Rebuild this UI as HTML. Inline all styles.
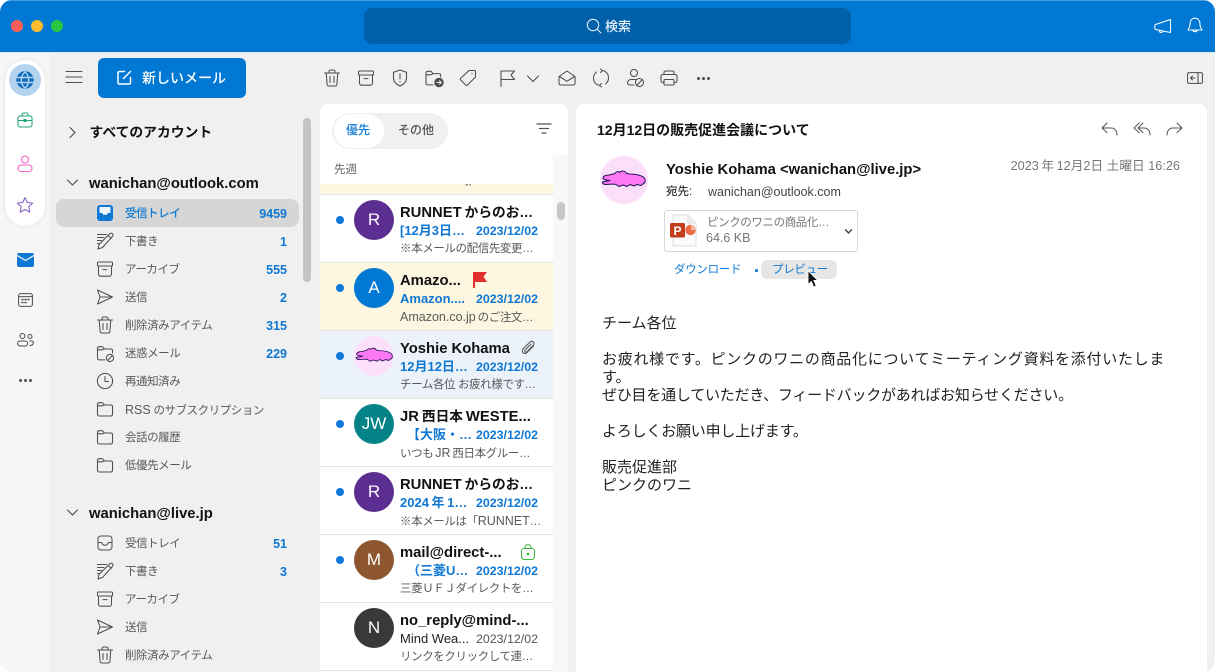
<!DOCTYPE html>
<html lang="ja"><head><meta charset="utf-8"><title>Outlook</title>
<style>
html,body{margin:0;padding:0;width:1215px;height:672px;overflow:hidden;background:#fff}
body{font-family:"Liberation Sans","Noto Sans CJK JP",sans-serif;color:#111}
#w{position:absolute;left:0;top:0;width:1215px;height:672px;background:#f0f0f0;border-radius:12px;overflow:hidden}
.a{position:absolute}
.t{position:absolute;white-space:nowrap;line-height:20px;height:20px}
svg.i{position:absolute;fill:none;stroke:currentColor;stroke-width:1.05;stroke-linecap:round;stroke-linejoin:round;overflow:visible}
.f{left:125px;font-size:11.500px;letter-spacing:-.45px;color:#595959;margin-top:1px}
.l{font-size:12.500px;letter-spacing:0}
.c{right:928px;font-size:12.500px;font-weight:bold;color:#0f78d4;margin-top:.5px}
.fi{left:95px;width:20px;height:20px;color:#4f4f4f}
.tb{width:20px;height:20px;color:#4d4d4d}
.it{position:absolute;left:320px;width:233px;height:67px;border-bottom:1.500px solid #e4e4e4;background:#fff}
.dot{position:absolute;left:16px;width:8px;height:8px;border-radius:50%;background:#0f78d9;top:21px}
.av{position:absolute;left:34px;top:5px;width:40px;height:40px;border-radius:50%;color:#fff;font-size:17px;line-height:40px;text-align:center}
.n{position:absolute;left:80px;top:7.500px;font-size:14.800px;font-weight:bold;line-height:20px;white-space:nowrap;color:#111}
.n span{font-size:13.700px}
.s{position:absolute;left:80px;top:26px;font-size:13px;font-weight:bold;line-height:20px;white-space:nowrap;color:#0f78d4}
.d{position:absolute;right:15px;top:26px;font-size:12.400px;font-weight:bold;line-height:20px;color:#0f78d4}
.p{position:absolute;left:80px;top:43.500px;font-size:11.500px;letter-spacing:-.4px;line-height:20px;white-space:nowrap;color:#595959}
</style></head><body>
<svg width="0" height="0" style="position:absolute">
<defs>
<symbol id="trash" viewBox="0 0 20 20"><path d="M2.500 5h15M7 5V3.600C7 2.700 7.700 2 8.600 2h2.800c.9 0 1.600.7 1.600 1.600V5M4.200 5l.9 11.200c.1 1.100 1 1.800 2 1.800h5.800c1 0 1.900-.7 2-1.800L15.800 5M8 8.500v6M12 8.500v6"/></symbol>
<symbol id="arch" viewBox="0 0 20 20"><rect x="2.500" y="3" width="15" height="4" rx=".8"/><path d="M3.500 7v8c0 1.300 1 2.200 2.200 2.200h8.600c1.200 0 2.200-.9 2.200-2.200V7M8 10.600h4"/></symbol>
<symbol id="draft" viewBox="0 0 20 20"><path d="M2.500 3.500h9M2.500 6.500h6.500M2.500 9.500h4M2.500 12.500h2M3 18l1-4.500L14.800 2.800c.8-.8 2-.8 2.700 0 .7.700.7 1.900 0 2.600L7.500 16.500zM13.200 4.400l3 3"/></symbol>
<symbol id="send" viewBox="0 0 20 20"><path d="M2.500 3l15 7-15 7 2.600-7zM5.100 10h12.400"/></symbol>
<symbol id="folder" viewBox="0 0 20 20"><path d="M2.500 5.500C2.500 4.400 3.200 3.700 4.300 3.700h3.200l2 2.300h6.300c1.100 0 1.700.7 1.700 1.700v7.600c0 1-.6 1.700-1.700 1.700H4.200c-1 0-1.700-.7-1.700-1.700zM2.500 6.800h5l2-1"/></symbol>
<symbol id="junk" viewBox="0 0 20 20"><path d="M10 16.900H4.200c-1 0-1.700-.7-1.700-1.700V5.500c0-1.100.7-1.800 1.800-1.800h3.200l2 2.300h6.300c1 0 1.700.7 1.700 1.700V10M2.500 6.800h5l2-1"/><circle cx="15" cy="15" r="3.600"/><path d="M12.500 17.500l5-5"/></symbol>
<symbol id="clock" viewBox="0 0 20 20"><circle cx="10" cy="10" r="7.600"/><path d="M10 5.500V10.500h3.500"/></symbol>
<symbol id="inbox" viewBox="0 0 20 20"><rect x="3" y="3" width="14" height="14" rx="3"/><path d="M3 9.500h3.500c1 2 1.800 2.800 3.500 2.800s2.500-.8 3.500-2.800H17"/></symbol>
<symbol id="croc" viewBox="0 0 45 17"><path d="M2 8C2 6 5 5 8 5L14 3.500C15 1.500 17 1 18.500 2.500C20 .5 24 .5 25 3L28 4C34 4 40 5 43 7.500C45 10 44.500 13 42 14L40 15.500L36 14.500L33 16L29 14.500L26 16.500L22 15L18 16.500L15 14.500C12 13.500 9 14.500 5 14.500C3 14.500 1 13.500 1.500 12L9 10.500C6 10 2 10 2 8Z" fill="#ff78f4" stroke="#1d1455" stroke-width="1" stroke-linejoin="round"/></symbol>
</defs></svg>
<div id="w">
<!-- title bar -->
<div class="a" style="left:0;top:0;width:1215px;height:52px;background:#0078d4;border-top:1px solid #4a9ce0;box-sizing:border-box"></div>
<div class="a" style="left:0;top:52px;width:1215px;height:1px;background:#dbe9f5"></div>
<div class="a" style="left:11px;top:20px;width:12px;height:12px;border-radius:50%;background:#ff5f57"></div>
<div class="a" style="left:31px;top:20px;width:12px;height:12px;border-radius:50%;background:#febc2e"></div>
<div class="a" style="left:51px;top:20px;width:12px;height:12px;border-radius:50%;background:#28c840"></div>
<div class="a" style="left:364px;top:8px;width:487px;height:36px;border-radius:8px;background:#0060aa"></div>
<svg class="i" style="left:586px;top:18px;width:16px;height:16px;color:#e9f2fb" viewBox="0 0 16 16"><circle cx="7" cy="7" r="5.700"/><path d="M11 11l4 4"/></svg>
<div class="t" style="left:605px;top:16.500px;font-size:13px;font-weight:500;color:#e9f2fb">検索</div>
<svg class="i" style="left:1154px;top:18px;width:18px;height:16px;color:#fff" viewBox="0 0 18 16"><path d="M1.500 6.500L16.500 1.500V14.500L1.500 11.500C.5 11 .5 7 1.500 6.500zM5 12l.5 1.800c1 1 3 1 3.500-.8"/></svg>
<svg class="i" style="left:1187px;top:17px;width:16px;height:17px;color:#fff" viewBox="0 0 16 17"><path d="M3 7.500C3 3.500 5 1.200 8 1.200s5 2.300 5 6.300c0 3 1.500 4 2 5.500H1c.5-1.500 2-2.500 2-5.500zM6 13.500c.2 1.600 3.800 1.600 4 0"/></svg>

<!-- left rail -->
<div class="a" style="left:0;top:53px;width:50px;height:619px;background:#f6f6f6"></div>
<div class="a" style="left:5px;top:60px;width:40px;height:166px;border-radius:20px;background:#fff;box-shadow:0 0 4px rgba(0,0,0,.1)"></div>
<div class="a" style="left:9px;top:64px;width:32px;height:32px;border-radius:50%;background:#b3d3ef"></div>
<svg class="i" style="left:16px;top:71px;width:18px;height:18px;color:#0f6cbd;stroke-width:1.400" viewBox="0 0 18 18"><circle cx="9" cy="9" r="8" fill="#0f6cbd"/><path d="M1 6.500h16M1 11.500h16M9 1c-5 4-5 12 0 16M9 1c5 4 5 12 0 16" stroke="#b3d3ef"/></svg>
<svg class="i" style="left:17px;top:112px;width:16px;height:16px;color:#1fa37c" viewBox="0 0 16 16"><rect x="1" y="4" width="14" height="11" rx="2"/><path d="M5 4V2.500C5 1.700 5.700 1 6.500 1h3c.8 0 1.500.7 1.500 1.500V4M1 8.500h14"/><rect x="7" y="7.500" width="2" height="2" fill="#1fa37c"/></svg>
<svg class="i" style="left:17px;top:155px;width:16px;height:17px;color:#f25bc0" viewBox="0 0 16 17"><circle cx="8" cy="4.500" r="3.500"/><rect x="1" y="10" width="14" height="6.500" rx="3.200"/></svg>
<svg class="i" style="left:16px;top:196px;width:18px;height:18px;color:#8661c5" viewBox="0 0 18 18"><path d="M9 1.500l2.300 5 5.400.6-4 3.700 1.100 5.400L9 13.500l-4.800 2.700 1.100-5.400-4-3.700 5.400-.6z"/></svg>
<svg class="a" style="left:17px;top:253px" width="17" height="14" viewBox="0 0 17 14"><rect width="17" height="14" rx="2" fill="#0f78d4"/><path d="M0 2.500l8.500 5L17 2.500" stroke="#dbe9f5" stroke-width="1.400" fill="none"/></svg>
<svg class="i" style="left:18px;top:293px;width:15px;height:14px;color:#4f4f4f" viewBox="0 0 15 14"><rect x=".6" y=".6" width="13.800" height="12.800" rx="2"/><path d="M.6 3.600h13.800"/><path d="M4 6.500h1M7 6.500h1M10 6.500h1M4 9.500h1M7 9.500h1" stroke-width="1.500"/></svg>
<svg class="i" style="left:17px;top:333px;width:17px;height:14px;color:#4f4f4f" viewBox="0 0 17 14"><circle cx="5.500" cy="3" r="2.500"/><circle cx="13" cy="3.500" r="2"/><rect x=".6" y="8" width="10" height="5" rx="2.500"/><path d="M12.500 8H15c1 0 1.500 1 1.300 2-.3 1.500-1.500 2.500-3.300 2.500"/></svg>
<div class="a" style="left:19px;top:379px;width:3px;height:3px;border-radius:50%;background:#4f4f4f;box-shadow:5px 0 #4f4f4f,10px 0 #4f4f4f"></div>

<!-- hamburger / new mail -->
<svg class="i" style="left:66px;top:71px;width:16px;height:12px;color:#4f4f4f" viewBox="0 0 16 12"><path d="M0 .5h16M0 6h16M0 11.500h16"/></svg>
<div class="a" style="left:98px;top:58px;width:148px;height:40px;border-radius:6px;background:#0078d4"></div>
<svg class="i" style="left:117px;top:70px;width:15px;height:15px;color:#fff;stroke-width:1.500" viewBox="0 0 15 15"><path d="M7.500 1.500H2.500C1.500 1.500 1 2 1 3v9.500c0 1 .5 1.500 1.500 1.500H12c1 0 1.500-.5 1.500-1.500V7.500M6.500 8.500L13.500 1.500"/></svg>
<div class="t" style="left:142px;top:68px;font-size:14px;font-weight:500;color:#fff">新しいメール</div>

<!-- nav -->
<svg class="i" style="left:69px;top:127px;width:7px;height:11px;color:#444" viewBox="0 0 7 11"><path d="M1 .5L6 5.500 1 10.500"/></svg>
<div class="t" style="left:89.500px;top:123px;font-size:13.800px;font-weight:bold">すべてのアカウント</div>
<svg class="i" style="left:67px;top:179px;width:11px;height:7px;color:#444" viewBox="0 0 11 7"><path d="M.5 1L5.500 6 10.500 1"/></svg>
<div class="t" style="left:89px;top:174px;font-size:14.800px;font-weight:bold">wanichan@outlook.com</div>
<div class="a" style="left:56px;top:199px;width:243px;height:28px;border-radius:8px;background:#d6d6d6"></div>
<div class="a" style="left:303px;top:118px;width:8px;height:164px;border-radius:4px;background:#c4c4c4"></div>

<svg class="a" style="left:97px;top:205px" width="16" height="16" viewBox="0 0 16 16"><rect width="16" height="16" rx="3" fill="#0f78d4"/><path d="M2.500 2h11v6h-2.500l-1.200 1.800H6.200L5 8H2.500z" fill="#eef5fc"/></svg>
<div class="t f" style="top:203px;color:#0f78d4;font-weight:500">受信トレイ</div><div class="t c" style="top:203px">9459</div>
<svg class="i fi" style="top:231px"><use href="#draft"/></svg><div class="t f" style="top:231px">下書き</div><div class="t c" style="top:231px">1</div>
<svg class="i fi" style="top:259px"><use href="#arch"/></svg><div class="t f" style="top:259px">アーカイブ</div><div class="t c" style="top:259px">555</div>
<svg class="i fi" style="top:287px"><use href="#send"/></svg><div class="t f" style="top:287px">送信</div><div class="t c" style="top:287px">2</div>
<svg class="i fi" style="top:315px"><use href="#trash"/></svg><div class="t f" style="top:315px">削除済みアイテム</div><div class="t c" style="top:315px">315</div>
<svg class="i fi" style="top:343px"><use href="#junk"/></svg><div class="t f" style="top:343px">迷惑メール</div><div class="t c" style="top:343px">229</div>
<svg class="i fi" style="top:371px"><use href="#clock"/></svg><div class="t f" style="top:371px">再通知済み</div>
<svg class="i fi" style="top:399px"><use href="#folder"/></svg><div class="t f" style="top:399px"><span class="l">RSS</span> のサブスクリプション</div>
<svg class="i fi" style="top:427px"><use href="#folder"/></svg><div class="t f" style="top:427px">会話の履歴</div>
<svg class="i fi" style="top:455px"><use href="#folder"/></svg><div class="t f" style="top:455px">低優先メール</div>

<svg class="i" style="left:67px;top:509px;width:11px;height:7px;color:#444" viewBox="0 0 11 7"><path d="M.5 1L5.500 6 10.500 1"/></svg>
<div class="t" style="left:89px;top:504px;font-size:14.800px;font-weight:bold">wanichan@live.jp</div>
<svg class="i fi" style="top:533px"><use href="#inbox"/></svg><div class="t f" style="top:533px">受信トレイ</div><div class="t c" style="top:533px">51</div>
<svg class="i fi" style="top:561px"><use href="#draft"/></svg><div class="t f" style="top:561px">下書き</div><div class="t c" style="top:561px">3</div>
<svg class="i fi" style="top:589px"><use href="#arch"/></svg><div class="t f" style="top:589px">アーカイブ</div>
<svg class="i fi" style="top:617px"><use href="#send"/></svg><div class="t f" style="top:617px">送信</div>
<svg class="i fi" style="top:645px"><use href="#trash"/></svg><div class="t f" style="top:645px">削除済みアイテム</div>

<!-- toolbar -->
<svg class="i tb" style="left:322px;top:68px"><use href="#trash"/></svg>
<svg class="i tb" style="left:356px;top:68px"><use href="#arch"/></svg>
<svg class="i tb" style="left:390px;top:68px" viewBox="0 0 20 20"><path d="M10 2l6.500 2.200V10c0 4-3 6.500-6.500 8-3.500-1.500-6.500-4-6.500-8V4.200zM10 6v5M10 13.500v.5"/></svg>
<svg class="i tb" style="left:424px;top:68px" viewBox="0 0 20 20"><path d="M9 16.900H3.700c-1 0-1.700-.7-1.700-1.700V5c0-1 .7-1.700 1.700-1.700h3.300l2 2.300h6c1 0 1.700.7 1.700 1.700V9M2 6.800h5l2-1"/><circle cx="15" cy="14.500" r="4.200" fill="#4d4d4d"/><path d="M13 14.500h4M15.500 12.700l1.700 1.800-1.700 1.800" stroke="#f0f0f0"/></svg>
<svg class="i tb" style="left:458px;top:68px" viewBox="0 0 20 20"><path d="M11 2.500h5.500c.6 0 1 .4 1 1V9L9.500 17c-.5.500-1.300.500-1.800 0l-5-5c-.5-.5-.5-1.300 0-1.800zM14 5.500v.5"/></svg>
<svg class="i tb" style="left:498px;top:68px" viewBox="0 0 20 20"><path d="M3 18.500V3h13.500l-3.500 4 3.500 4.500H3"/></svg>
<svg class="i" style="left:527px;top:75px;width:12px;height:7px;color:#4d4d4d" viewBox="0 0 12 7"><path d="M.5 1L6 6.500 11.500 1"/></svg>
<svg class="i tb" style="left:557px;top:68px" viewBox="0 0 20 20"><path d="M2 8.500L10 3l8 5.500V15c0 1.200-.8 2-2 2H4c-1.200 0-2-.8-2-2zM2.500 8.500l7.500 4.800 7.500-4.800"/></svg>
<svg class="i tb" style="left:591px;top:68px" viewBox="0 0 20 20"><path d="M11 2.500c4 .5 6.500 3.500 6.500 7.500 0 2.500-1.200 4.500-3 6M9 17.500C5 17 2.500 14 2.500 10c0-2.500 1.200-4.500 3-6M9.500 1L11.500 2.600 9.500 4.500M10.500 15.500L8.500 17.400 10.500 19"/></svg>
<svg class="i tb" style="left:625px;top:68px" viewBox="0 0 20 20"><circle cx="9" cy="5" r="3.500"/><path d="M9 17H5c-1.500 0-2.500-1-2.500-2.200 0-1.800 1.500-3.300 3.500-3.300h5"/><circle cx="14.500" cy="14.500" r="4"/><path d="M11.800 17.200l5.400-5.400"/></svg>
<svg class="i tb" style="left:659px;top:68px" viewBox="0 0 20 20"><path d="M5 6.500V4.500C5 3.500 5.700 3 6.500 3h7c.8 0 1.500.5 1.500 1.500v2M5 14.500H4c-1.200 0-2-.8-2-2V8.500c0-1.200.8-2 2-2h12c1.200 0 2 .8 2 2v4c0 1.200-.8 2-2 2h-1"/><rect x="5" y="11.500" width="10" height="5.500" rx="1"/></svg>
<div class="a" style="left:697px;top:77px;width:3px;height:3px;border-radius:50%;background:#4d4d4d;box-shadow:5px 0 #4d4d4d,10px 0 #4d4d4d"></div>
<svg class="i" style="left:1187px;top:72px;width:16px;height:12px;color:#4d4d4d" viewBox="0 0 16 12"><rect x=".6" y=".6" width="14.800" height="10.800" rx="1.500"/><path d="M11 .6v10.800M8 6H3.500M5.500 4L3.500 6l2 2"/></svg>

<!-- list panel -->
<div class="a" style="left:320px;top:104px;width:248px;height:568px;background:#fff;border-radius:8px 8px 0 0;overflow:hidden">
 <div class="a" style="left:233px;top:51px;width:15px;height:517px;background:#f8f8f8"></div>
 <div class="a" style="left:237px;top:98px;width:8px;height:18px;border-radius:4px;background:#c6c6c6"></div>
</div>
<div class="a" style="left:332px;top:113px;width:116px;height:36px;border-radius:18px;background:#f0f0f0"></div>
<div class="a" style="left:334px;top:114px;width:50px;height:34px;border-radius:17px;background:#fff"></div>
<div class="t" style="left:346px;top:120px;font-size:12px;font-weight:500;color:#0f78d4">優先</div>
<div class="t" style="left:398px;top:120px;font-size:12px;font-weight:500;color:#555">その他</div>
<svg class="i" style="left:536px;top:123px;width:16px;height:11px;color:#555;stroke-width:1.300" viewBox="0 0 16 11"><path d="M1 1h14M3.500 5.500h9M6 10h4"/></svg>
<div class="t" style="left:334px;top:160px;font-size:11.500px;color:#666">先週</div>
<div class="a" style="left:320px;top:184px;width:233px;height:10px;background:#fdf6e0;overflow:hidden"><div class="t" style="left:80px;top:-15px;font-size:11px;color:#595959"><span class="l">Amazon.co.jp</span> のご注文</div></div>
<div class="a" style="left:320px;top:194px;width:233px;height:1px;background:#e4e4e4"></div>

<div class="it" style="top:195px"><div class="dot"></div><div class="av" style="background:#5c2e91">R</div><div class="n">RUNNET&#8201;<span>からのお…</span></div><div class="s">[12月3日…</div><div class="d">2023/12/02</div><div class="p">※本メールの配信先変更…</div></div>
<div class="it" style="top:263px;background:#fdf6e0"><div class="dot"></div><div class="av" style="background:#0078d4">A</div><div class="n">Amazo...</div>
<svg class="a" style="left:153px;top:9px" width="14" height="16" viewBox="0 0 14 16"><path d="M0 0h14l-3.500 4.500L14 10H2v6H0z" fill="#e3302f"/></svg>
<div class="s">Amazon....</div><div class="d">2023/12/02</div><div class="p"><span class="l">Amazon.co.jp</span>&#8201;のご注文…</div></div>
<div class="it" style="top:331px;background:#ecf2fa"><div class="dot"></div><div class="av" style="background:#fce0fb"><svg class="a" style="left:1px;top:11px" width="38" height="15"><use href="#croc"/></svg></div><div class="n">Yoshie Kohama</div>
<svg class="i" style="left:200px;top:9px;width:16px;height:16px;color:#555" viewBox="0 0 16 16"><path d="M13.500 6L7 12.500c-1.200 1.200-3 1.200-4 .2s-1-2.800.2-4L10 2c.9-.9 2.400-.9 3.300 0s.9 2.400 0 3.300L7 11.700c-.5.500-1.300.5-1.800 0s-.5-1.300 0-1.800L11 4"/></svg>
<div class="s">12月12日…</div><div class="d">2023/12/02</div><div class="p">チーム各位 お疲れ様です…</div></div>
<div class="it" style="top:399px"><div class="dot"></div><div class="av" style="background:#038387">JW</div><div class="n">JR&#8201;<span>西日本</span>&#8201;WESTE...</div><div class="s" style="left:87px">【大阪・…</div><div class="d">2023/12/02</div><div class="p">いつも&#8201;<span class="l">JR</span>&#8201;西日本グルー…</div></div>
<div class="it" style="top:467px"><div class="dot"></div><div class="av" style="background:#5c2e91">R</div><div class="n">RUNNET&#8201;<span>からのお…</span></div><div class="s">2024&#8201;年&#8201;1…</div><div class="d">2023/12/02</div><div class="p">※本メールは「<span class="l">RUNNET</span>…</div></div>
<div class="it" style="top:535px"><div class="dot"></div><div class="av" style="background:#8e562e">M</div><div class="n">mail@direct-...</div>
<svg class="i" style="left:201px;top:9px;width:14px;height:16px;color:#3fb33f" viewBox="0 0 14 16"><rect x=".6" y="4.500" width="12.800" height="11" rx="2.500"/><path d="M4 4.500V3c0-1.500 1.300-2.400 3-2.400s3 .9 3 2.400v1.500"/><circle cx="7" cy="10" r=".8" fill="#3fb33f"/></svg>
<div class="s" style="left:87px">（三菱U…</div><div class="d">2023/12/02</div><div class="p">三菱ＵＦＪダイレクトを…</div></div>
<div class="it" style="top:603px"><div class="av" style="background:#393939">N</div><div class="n">no_reply@mind-...</div><div class="s" style="color:#222;font-weight:normal">Mind Wea...</div><div class="d" style="color:#555;font-weight:normal">2023/12/02</div><div class="p">リンクをクリックして連…</div></div>

<!-- reading pane -->
<div class="a" style="left:576px;top:104px;width:631px;height:568px;background:#fff;border-radius:8px 8px 0 0"></div>
<div class="t" style="left:597px;top:120px;font-size:14px;font-weight:bold">12月12日の販売促進会議について</div>
<svg class="i" style="left:1101px;top:122px;width:17px;height:14px;color:#555" viewBox="0 0 17 14"><path d="M6 1L1 6l5 4.500M1 6h9c3.500 0 6 2.500 6 7"/></svg>
<svg class="i" style="left:1133px;top:122px;width:18px;height:14px;color:#555" viewBox="0 0 18 14"><path d="M6 1L1 6l5 4.500M10 1L5 6l5 4.500M5 6h6c3.500 0 6 2.500 6 7"/></svg>
<svg class="i" style="left:1166px;top:122px;width:17px;height:14px;color:#555" viewBox="0 0 17 14"><path d="M11 1l5 5-5 4.500M16 6H7c-3.500 0-6 2.500-6 7"/></svg>
<div class="a" style="left:600px;top:156px;width:48px;height:48px;border-radius:50%;background:#fce0fb"></div>
<svg class="a" style="left:601px;top:170px" width="45" height="17"><use href="#croc"/></svg>
<div class="t" style="left:666px;top:159.500px;font-size:14.800px;font-weight:bold">Yoshie Kohama &lt;wanichan@live.jp&gt;</div>
<div class="t" style="right:35px;top:156px;font-size:12.700px;color:#777">2023&#8201;年&#8201;12月2日 土曜日 16:26</div>
<div class="t" style="left:666px;top:182px;font-size:11.500px;font-weight:500;color:#333">宛先:</div>
<div class="t" style="left:708px;top:182px;font-size:12.500px;color:#444">wanichan@outlook.com</div>
<div class="a" style="left:664px;top:210px;width:194px;height:42px;box-sizing:border-box;border:1px solid #d8d8d8;border-radius:3px;background:#fff"></div>
<svg class="a" style="left:669px;top:214px" width="28" height="34" viewBox="0 0 28 34"><path d="M4 1h15l8 8V32H4z" fill="#fbfbfb" stroke="#ddd"/><path d="M19 1v8h8" fill="#eee" stroke="#ddd"/><circle cx="21.500" cy="16" r="5.200" fill="#ed6c47"/><path d="M22 10.800a5.200 5.200 0 0 1 4.700 5.200H22z" fill="#f5b59f"/><rect x="1" y="9" width="15" height="14.500" rx="1.500" fill="#c43e1c"/><text x="8.500" y="21" font-size="12" font-weight="bold" fill="#fff" text-anchor="middle" font-family="Liberation Sans">P</text></svg>
<div class="t" style="left:707px;top:213px;font-size:11.500px;letter-spacing:-.4px;color:#777">ピンクのワニの商品化…</div>
<div class="t" style="left:706px;top:228px;font-size:12.500px;color:#777">64.6 KB</div>
<svg class="i" style="left:845px;top:229px;width:7px;height:5px;color:#444;stroke-width:1.400" viewBox="0 0 7 5"><path d="M.5 .8L3.500 4 6.500 .8"/></svg>
<div class="t" style="left:674px;top:260px;font-size:11.500px;letter-spacing:-.3px;color:#0f78d4">ダウンロード</div>
<div class="a" style="left:755px;top:269px;width:2.500px;height:2.500px;border-radius:50%;background:#0f78d4"></div>
<div class="a" style="left:761px;top:260px;width:76px;height:19px;border-radius:6px;background:#e6e6e6"></div>
<div class="t" style="left:772px;top:260px;font-size:11.500px;letter-spacing:-.3px;color:#0f78d4">プレビュー</div>
<svg class="a" style="left:807px;top:270px" width="13" height="19" viewBox="0 0 13 19"><path d="M1 .5V14.500l3.400-3 2.300 5.500 2.500-1-2.300-5.500H11z" fill="#111" stroke="#fff" stroke-width=".9"/></svg>

<div class="a" style="left:602px;top:315px;font-size:15px;line-height:18px;color:#222;white-space:nowrap">チーム各位<br><br><span style="letter-spacing:.72px">お疲れ様です。ピンクのワニの商品化についてミーティング資料を添付いたしま</span><br>す。<br><span style="letter-spacing:-.22px">ぜひ目を通していただき、フィードバックがあればお知らせください。</span><br><br><span style="letter-spacing:-.2px">よろしくお願い申し上げます。</span><br><br>販売促進部<br>ピンクのワニ</div>
</div>
</body></html>
